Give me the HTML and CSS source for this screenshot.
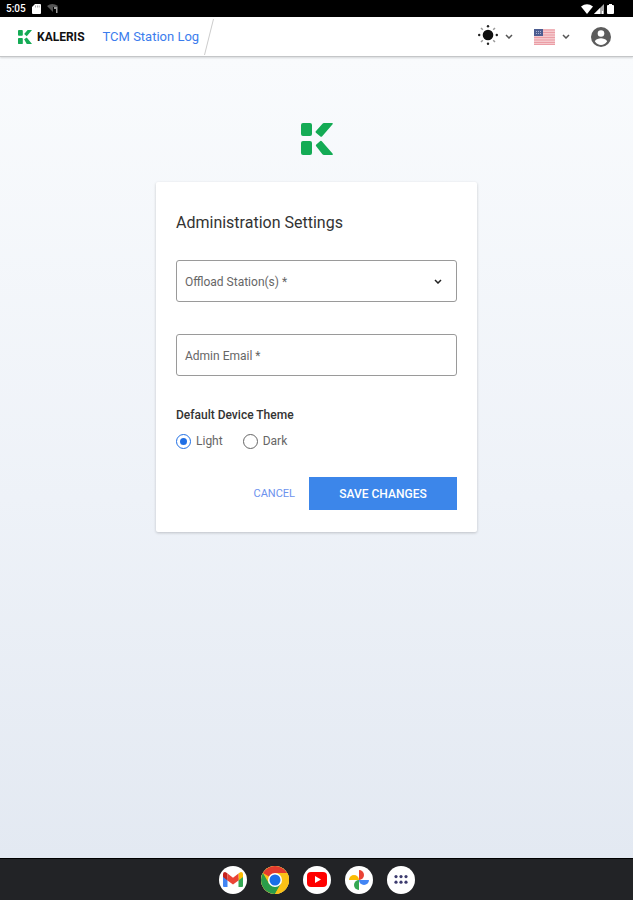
FILE: index.html
```html
<!DOCTYPE html>
<html lang="en">
<head>
  <meta charset="UTF-8">
  <meta name="viewport" content="width=device-width, initial-scale=1.0">
  <title>TCM Station Log</title>
  <link rel="stylesheet" href="styles.css">
</head>
<body>
  <!-- Status bar -->
  <div class="status-bar">
    <div class="status-left">
      <span>5:05</span>
      <svg width="9" height="10" viewBox="0 0 9 10"><path d="M3 0h5q1 0 1 1v8q0 1-1 1H1q-1 0-1-1V3z" fill="#fff"/><path d="M3.500 1.500v2M5.500 1.500v2M7.200 1.500v2" stroke="#777" stroke-width=".6"/></svg>
      <svg width="12" height="10" viewBox="0 0 12 10"><path d="M0 2q5-4 11 0L9 4.500V3H6v5z" fill="#555"/><path d="M7 3h3.500v6H9V5H7z" fill="#999"/></svg>
    </div>
    <div class="status-right">
      <svg width="12" height="10" viewBox="0 0 12 10"><path d="M0 2.500Q6-2 12 2.500L6 10z" fill="#fff"/></svg>
      <svg width="10" height="10" viewBox="0 0 10 10"><path d="M10 0v10H0z" fill="#aaa"/><path d="M6 4v6H0zM8 7h1v3H8z" fill="#fff"/></svg>
      <svg class="battery" width="7" height="10" viewBox="0 0 7 10"><path d="M2 0h3v1h1q1 0 1 1v7q0 1-1 1H1q-1 0-1-1V2q0-1 1-1h1z" fill="#fff"/></svg>
    </div>
  </div>

  <!-- App header -->
  <header class="app-header">
    <div class="brand">
      <svg width="14" height="14" viewBox="0 0 32 32" fill="#14ab55"><path d="M2 0h7q2 0 2 2v9q0 2-2 2H2q-2 0-2-2V2q0-2 2-2zM2 18h7q2 0 2 2v10q0 2-2 2H2q-2 0-2-2V20q0-2 2-2zM22 0h10L20 14l-6-5zM20 17l12 15H20l-6-11z"/></svg>
      <span class="brand-name">KALERIS</span>
    </div>
    <h1 class="app-title">TCM Station Log</h1>
    <svg class="slash" width="10" height="36" viewBox="0 0 10 36"><path d="M9.500 0L.5 36" stroke="#ccc" fill="none"/></svg>
    <nav class="tools">
      <button type="button" class="tool" aria-label="Theme">
        <svg width="20" height="24" viewBox="0 0 20 24"><circle cx="10" cy="10" r="5.300" fill="#111"/><path d="M4.800 4.800L3 3M15.200 4.800L17 3M4.800 15.200L3 17M15.200 15.200L17 17" stroke="#999" stroke-width="1.500"/><g fill="#222"><circle cx="10" cy="1.200" r="1.200"/><circle cx="10" cy="18.800" r="1.200"/><circle cx="1.200" cy="10" r="1.200"/><circle cx="18.800" cy="10" r="1.200"/></g></svg>
        <svg class="chevron" width="8" height="5" viewBox="0 0 8 5"><path d="M1 1l3 3 3-3"/></svg>
      </button>
      <button type="button" class="tool" aria-label="Language">
        <svg width="21" height="16" viewBox="0 0 21 16"><rect width="21" height="16" rx="1" fill="#f4c9cd"/><path d="M0 1h21M0 3.500h21M0 6h21M0 8.500h21M0 11h21M0 13.500h21M0 15.500h21" stroke="#eb9da5"/><rect width="9" height="7" fill="#4d5d91"/><path d="M2 2.500h5M2 4.500h5" stroke="#a9b1cf" stroke-dasharray="1 1"/></svg>
        <svg class="chevron" width="8" height="5" viewBox="0 0 8 5"><path d="M1 1l3 3 3-3"/></svg>
      </button>
      <button type="button" class="tool" aria-label="Account">
        <svg width="20" height="20" viewBox="0 0 20 20"><circle cx="10" cy="10" r="10" fill="#5c5c5c"/><circle cx="10" cy="6.500" r="3.300" fill="#fff"/><path d="M3.800 14.200C5 12 8 11.200 10 11.200s5 .8 6.200 3C14.500 16.800 12.500 18 10 18s-4.500-1.200-6.200-3.800z" fill="#fff"/></svg>
      </button>
    </nav>
  </header>

  <main class="page">
    <svg class="logo" width="32" height="32" viewBox="0 0 32 32" fill="#14ab55"><path d="M2 0h7q2 0 2 2v9q0 2-2 2H2q-2 0-2-2V2q0-2 2-2zM2 18h7q2 0 2 2v10q0 2-2 2H2q-2 0-2-2V20q0-2 2-2zM21.500 .7Q22 0 23 0h8q1.500 0 .6 1.200L21 13.400q-.7.8-1.600.1l-4.500-3.800q-.7-.6-.1-1.400zM19.300 18q.8-.7 1.500.2L31.500 30.600Q32.600 32 31 32h-8q-1 0-1.600-.8l-6.200-8q-.7-.9.1-1.600z"/></svg>

    <form class="card">
      <h2>Administration Settings</h2>
      <div class="field">
        <select id="station" required>
          <option value="" selected></option>
        </select>
        <label for="station">Offload Station(s) *</label>
        <svg class="chevron" width="8" height="5" viewBox="0 0 8 5"><path d="M1 1l3 3 3-3"/></svg>
      </div>
      <div class="field">
        <input id="email" type="email" required>
        <label for="email">Admin Email *</label>
      </div>
      <fieldset class="theme">
        <legend>Default Device Theme</legend>
        <div class="options">
          <label><input type="radio" name="theme" value="light" checked>Light</label>
          <label><input type="radio" name="theme" value="dark">Dark</label>
        </div>
      </fieldset>
      <div class="actions">
        <button type="button" class="btn-cancel">CANCEL</button>
        <button type="submit" class="btn-save">SAVE CHANGES</button>
      </div>
    </form>
  </main>

  <!-- Device dock -->
  <footer class="dock">
    <button type="button" class="app" aria-label="Gmail">
      <svg width="20" height="15" viewBox="0 0 20 15"><path d="M0 2v12q0 1 1 1h3.500V6z" fill="#4285f4"/><path d="M20 2v12q0 1-1 1h-3.500V6z" fill="#34a853"/><path d="M15.500 1.500Q17 0 18 0q2 0 2 2v3l-4.500 3.500z" fill="#fbbc04"/><path d="M0 2Q0 0 2 0q1 0 2.500 1.500V8.500L0 5z" fill="#c5221f"/><path d="M4.500 1.500L10 5.800l5.500-4.300v7L10 12.500 4.500 8.500z" fill="#ea4335"/></svg>
    </button>
    <button type="button" class="app" aria-label="Chrome">
      <svg width="28" height="28" viewBox="0 0 28 28"><circle cx="14" cy="14" r="14" fill="#fbc116"/><path d="M14 14L1.900 7A14 14 0 0 1 26.100 7z" fill="#e33b2e"/><path d="M1.900 7A14 14 0 0 0 14 28l6-10.500L14 14 8 17.500z" fill="#2a9c4a"/><path d="M14 7h12.100A14 14 0 0 1 14 28l6-10.500z" fill="#fbc116"/><circle cx="14" cy="14" r="7" fill="#fff"/><circle cx="14" cy="14" r="5.500" fill="#1a6fe8"/></svg>
    </button>
    <button type="button" class="app" aria-label="YouTube">
      <svg width="20" height="15" viewBox="0 0 20 15"><rect width="20" height="15" rx="4" fill="#f00"/><path d="M8 4l6 3.500L8 11z" fill="#fff"/></svg>
    </button>
    <button type="button" class="app" aria-label="Photos">
      <svg width="20" height="20" viewBox="0 0 20 20"><path d="M10 10V0a5 5 0 0 1 0 10z" fill="#ea4335"/><path d="M10 10h10a5 5 0 0 1-10 0z" fill="#4285f4"/><path d="M10 10v10a5 5 0 0 1 0-10z" fill="#34a853"/><path d="M10 10H0a5 5 0 0 1 10 0z" fill="#fbbc04"/></svg>
    </button>
    <button type="button" class="app" aria-label="All apps">
      <svg width="14" height="9" viewBox="0 0 14 9" fill="#3c3b6e"><circle cx="2" cy="1.600" r="1.600"/><circle cx="7" cy="1.600" r="1.600"/><circle cx="12" cy="1.600" r="1.600"/><circle cx="2" cy="7.200" r="1.600"/><circle cx="7" cy="7.200" r="1.600"/><circle cx="12" cy="7.200" r="1.600"/></svg>
    </button>
  </footer>
</body>
</html>
```
FILE: styles.css
```css
* { margin:0; padding:0; box-sizing:border-box; }
body { min-height:100vh; display:flex; flex-direction:column; font-family:Roboto, sans-serif; color:#333; }
svg { display:block; flex:none; }
button, input, select { font-family:inherit; }
button { border:0; background:none; cursor:pointer; }

.status-bar { display:flex; justify-content:space-between; align-items:center; height:17px; padding:0 19px 0 6px; background:#000; color:#fff; font-size:10px; font-weight:500; }
.status-left, .status-right { display:flex; align-items:center; gap:5px; }
.status-left { gap:6px; }
.status-right { gap:1px; }
.battery { margin-left:2px; }

.app-header { display:flex; align-items:center; height:40px; padding:0 22px 0 18px; background:#fff; border-bottom:1px solid #c4c6c8; box-shadow:0 1px 2px rgba(0,0,0,0.15); z-index:1; }
.brand { display:flex; align-items:center; gap:5px; }
.brand-name { color:#111; font-size:12px; font-weight:700; }
.app-title { margin-left:18px; color:#3b7ded; font-size:13px; font-weight:400; }
.slash { margin-left:5px; }
.tools { display:flex; align-items:center; gap:21px; margin-left:auto; }
.tool { display:flex; align-items:center; gap:7px; }
.chevron { fill:none; stroke:#555; stroke-width:1.5; }

.page { flex:1; display:flex; flex-direction:column; align-items:center; padding:66px 20px; background:linear-gradient(#f9fbfd, #eef2f8 55%, #e3e9f2); }
.card { width:100%; max-width:321px; margin-top:27px; padding:31px 20px 22px; background:#fff; border-radius:2px; box-shadow:0 1px 3px rgba(0,0,0,0.2); }
.card h2 { margin-bottom:27px; color:#333; font-size:16px; line-height:20px; font-weight:400; }

.field { position:relative; height:42px; margin-bottom:32px; }
.field input, .field select { width:100%; height:100%; padding:0 8px; appearance:none; background:#fff; border:1px solid #9a9a9a; border-radius:3px; font-size:12px; color:#333; }
.field label { position:absolute; left:9px; top:14px; color:#666; font-size:12px; line-height:16px; pointer-events:none; }
.field .chevron { position:absolute; right:15px; top:19px; stroke:#222; pointer-events:none; }

.theme { border:0; margin-bottom:28px; }
.theme legend { color:#333; font-size:12px; line-height:14px; font-weight:500; }
.options { display:flex; gap:20px; padding-top:11px; }
.options label { display:flex; align-items:center; gap:5px; color:#666; font-size:12px; line-height:16px; }
.options input { appearance:none; display:grid; place-items:center; width:15px; height:15px; border:1px solid #666; border-radius:50%; background:#fff; }
.options input:checked { border-color:#1f6fe5; }
.options input:checked::before { content:""; width:7px; height:7px; border-radius:50%; background:#1f6fe5; }

.actions { display:flex; justify-content:flex-end; align-items:center; gap:14px; }
.btn-cancel { color:#6c92ee; font-size:11px; }
.btn-save { width:148px; height:33px; background:#3c86ea; color:#fff; font-size:12px; font-weight:500; }

.dock { display:flex; justify-content:center; align-items:center; gap:14px; height:42px; background:#222326; border-top:1px solid #000; }
.app { display:flex; align-items:center; justify-content:center; width:28px; height:28px; border-radius:50%; background:#fff; }
```
